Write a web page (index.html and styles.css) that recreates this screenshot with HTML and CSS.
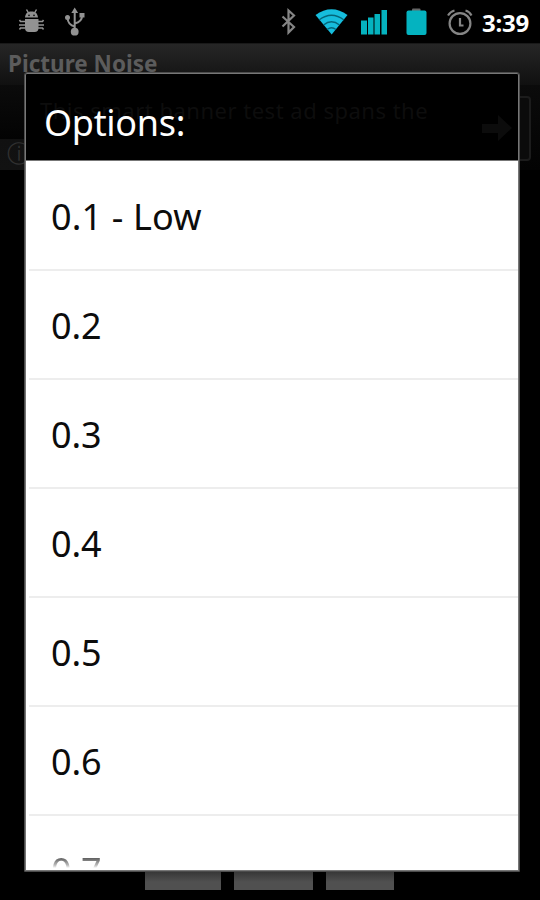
FILE: index.html
```
<!DOCTYPE html>
<html lang="en">
<head>
<meta charset="utf-8">
<title>Picture Noise</title>
<link rel="stylesheet" href="styles.css">
</head>
<body>
<div class="screen">
  <header class="status">
    <svg class="status-icons" width="476" height="44" viewBox="0 0 476 44">
      <g fill="#929292" stroke="#929292">
        <path stroke="none" d="M25 17.500C25.500 13 28 11.500 31.500 11.500S37.500 13 38 17.500ZM25 19H38.500V28Q38.500 32 34.500 32H29Q25 32 25 28Z"/>
        <path fill="none" stroke-width="1.500" d="M28.500 13L26.500 9.500M34.500 13L36.500 9.500M25 21.500H20.500L19.500 20M25 25H19M25 28H20.500L19.500 29.500M38 21.500H42.500L43.500 20M38 25H44M38 28H42.500L43.500 29.500"/>
        <circle cx="29" cy="15.300" r=".9" fill="#111" stroke="none"/><circle cx="34" cy="15.300" r=".9" fill="#111" stroke="none"/>
      </g>
      <g fill="none" stroke="#929292" stroke-width="2">
        <path d="M74.700 31V11M74.700 26.500Q68 25 67.500 18M74.700 23.500Q82 22 82.200 15"/>
        <g fill="#929292" stroke="none"><circle cx="74.700" cy="31.700" r="3.900"/><path d="M71.300 13L74.700 7.500L78.100 13Z"/><circle cx="67.500" cy="17.500" r="2.500"/><path d="M79.500 13h5v4.500h-5z"/></g>
      </g>
      <path d="M282.500 16.500L294 27L288.500 32.500V10.500L294 15.500L282.500 26.500" fill="none" stroke="#858585" stroke-width="2.200"/>
      <path d="M315.500 15Q331.500 3.500 347.500 15L331.700 34.500Z" fill="#16bddd"/>
      <path d="M319 20Q331.500 10.500 344 20M323.500 25Q331.500 18.500 339.500 25M327 29.500Q331.500 26 336 29.500" fill="none" stroke="#04667a" stroke-width="1.300"/>
      <path d="M361 20.500h6v14h-6zM368 17.500h5.500v17H368zM374.500 14h5.500v20.500h-5.500zM381.500 10h5.500v24.500h-5.500z" fill="#05b3bf"/>
      <path d="M412 11V9.500Q412 8.500 413 8.500H419.500Q420.500 8.500 420.500 9.500V11Z" fill="#666"/>
      <rect x="406.500" y="10.500" width="20" height="24.500" rx="2" fill="#04b3c0"/>
      <g fill="none" stroke="#858585" stroke-width="2.200"><circle cx="460" cy="23.500" r="10.400"/><path d="M460 18V25.500H463.500M448 15.500Q450.500 11.500 454.500 10.500M465.500 10.500Q469.500 11.500 471.500 15.500"/></g>
    </svg>
    <time class="clock">3:39</time>
  </header>
  <div class="titlebar">Picture Noise</div>
  <div class="banner">
    <div class="ad"></div>
    <span class="info">ⓘ</span>
  </div>
  <footer class="tools"><span class="tool"></span><span class="tool tool-wide"></span><span class="tool tool-narrow"></span></footer>

  <section class="dialog">
    <h1 class="dialog-title">
      <span class="ghost">This smart banner test ad spans the</span>
      <svg class="ghost-arrow" width="30" height="28" viewBox="0 0 30 28"><path d="M0 9H16V0L30 13L16 26V18H0Z" fill="#0c0c0c"/></svg>
      <span class="label">Options:</span>
    </h1>
    <ul class="options">
      <li class="low">0.1 - Low</li>
      <li>0.2</li>
      <li>0.3</li>
      <li>0.4</li>
      <li>0.5</li>
      <li>0.6</li>
      <li class="faded">0.7</li>
    </ul>
  </section>
</div>
</body>
</html>
```
FILE: styles.css
```
* { box-sizing: border-box; }
body { margin: 0; background: #000; font-family: "Noto Sans", "Open Sans", sans-serif; }
.screen { position: relative; width: 540px; height: 900px; overflow: hidden; background: #000; display: flex; flex-direction: column; }
.status { height: 43px; display: flex; flex: none; }
.status-icons { flex: none; }
.clock { margin-left: 6px; color: #fff; font-size: 24px; font-weight: 700; line-height: 45px; letter-spacing: -.2px; }
.titlebar { flex: none; height: 42px; padding-left: 8px; border-top: 1px solid #191919; background: linear-gradient(#262626, #101010); color: #5c5c5c; font-size: 22.5px; font-weight: 700; line-height: 40px; white-space: nowrap; }
.banner { flex: none; height: 85px; display: flex; flex-direction: column; align-items: flex-end; background: linear-gradient(#0b0b0b, #030303 54px, #111 54px, #121212) 0 0 / 25px 100% no-repeat, linear-gradient(#0b0b0b, #030303); }
.ad { width: 60px; height: 65px; margin: 11px 9px 0 0; border: 2px solid #1c1c1c; border-radius: 4px; background: #0b0b0b; flex: none; }
.info { align-self: flex-start; margin: -22px 0 0 7px; color: #303030; font: 24px/30px "DejaVu Sans", sans-serif; }
.tools { margin-top: auto; display: flex; padding: 0 0 10px 145px; }
.tool { width: 76px; height: 30px; margin-right: 13px; background: linear-gradient(#373737 12px, #505050 22px); }
.tool-wide { width: 79px; }
.tool-narrow { width: 68px; margin-right: 0; }
.dialog { position: absolute; left: 24px; top: 72px; width: 496px; height: 800px; display: flex; flex-direction: column; border: 1px solid #4c4c4c; box-shadow: inset 0 0 0 1px #777; border-radius: 3px 3px 0 0; background: #000; padding: 1px; }
.dialog-title { position: relative; flex: none; margin: 0; height: 87px; padding-left: 18px; border-bottom: 1px solid #777; color: #fff; font-size: 36px; font-weight: 400; line-height: 97px; letter-spacing: -.3px; }
.label { position: relative; }
.ghost { position: absolute; left: 14px; top: 21px; color: #0d0d0d; font-size: 22px; line-height: 30px; letter-spacing: .5px; white-space: nowrap; }
.ghost-arrow { position: absolute; left: 456px; top: 41px; }
.options { flex: 1; min-height: 0; margin: 0; padding: 0; overflow: hidden; list-style: none; background: #fff; }
.options li { height: 109px; padding-left: 25px; background: linear-gradient(#ededed, #ededed) 3px 0 / 100% 2px no-repeat; color: #0c0c0c; font-size: 36px; line-height: 114px; letter-spacing: -.1px; }
.options li.low { height: 108px; line-height: 112px; background: none; letter-spacing: .15px; }
.options li.faded { color: transparent; background: linear-gradient(#ededed, #ededed) 3px 0 / 100% 2px no-repeat, linear-gradient(#505050 43px, #bbb 51px, #fff 54px) text; background-clip: border-box, text; }
```
